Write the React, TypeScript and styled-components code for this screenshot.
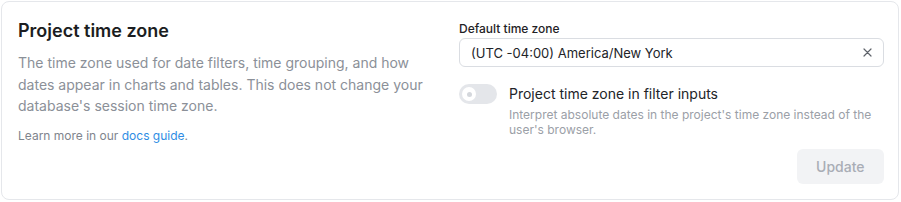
import styled, { createGlobalStyle } from "styled-components"

const GlobalStyle = createGlobalStyle`
  html, body {
    margin: 0;
    padding: 0;
    background: #ffffff;
  }
  body {
    font-family: Inter, "Noto Sans", sans-serif;
    -webkit-font-smoothing: antialiased;
  }
  #root {
    padding: 1px 2px 1px 1px;
  }
`

const Card = styled.section`
  box-sizing: border-box;
  width: 898px;
  border: 1px solid #e5e7eb;
  border-radius: 8px;
  background: #fff;
  padding: 16px 14px 15px 16px;
  display: grid;
  grid-template-columns: 1fr 1fr;
  column-gap: 16px;
`

const Column = styled.div`
  display: flex;
  flex-direction: column;
`

const Title = styled.h2`
  margin: 0;
  font-size: 18px;
  line-height: 26px;
  font-weight: 600;
  color: #1b1d21;
`

const Description = styled.p`
  margin: 8px 0 0;
  font-size: 14px;
  line-height: 21.6px;
  color: #8b9098;
`

const Note = styled.p`
  margin: 10px 0 0;
  font-size: 12px;
  line-height: 18px;
  color: #80858d;
`

const Link = styled.a`
  color: #2f8de4;
  text-decoration: none;
`

const FieldLabel = styled.label`
  margin-top: 3px;
  margin-bottom: 1px;
  font-size: 12px;
  line-height: 16px;
  font-weight: 500;
  color: #1f2226;
`

const Select = styled.div`
  box-sizing: border-box;
  height: 29px;
  display: flex;
  align-items: center;
  justify-content: space-between;
  padding: 0 11px;
  border: 1px solid #dadde2;
  border-radius: 6px;
  font-size: 13px;
  color: #222428;
`

const ClearButton = styled.span`
  display: flex;
  align-items: center;
  color: #5f636a;
`

const ToggleRow = styled.div`
  margin-top: 17px;
  display: flex;
  gap: 12px;
`

const Track = styled.div<{ $on?: boolean }>`
  flex: none;
  box-sizing: border-box;
  width: 38px;
  height: 20px;
  border-radius: 10px;
  background: ${(p) => (p.$on ? "#2f8de4" : "#e4e6ea")};
  padding: 3px;
  display: flex;
  justify-content: ${(p) => (p.$on ? "flex-end" : "flex-start")};
`

const Knob = styled.div`
  width: 14px;
  height: 14px;
  border-radius: 50%;
  background: #fff;
  display: flex;
  align-items: center;
  justify-content: center;
  &::after {
    content: "";
    width: 5px;
    height: 5px;
    border-radius: 50%;
    background: #d4d7dc;
  }
`

const ToggleText = styled.div`
  display: flex;
  flex-direction: column;
`

const ToggleLabel = styled.div`
  font-size: 14px;
  line-height: 20px;
  color: #222428;
`

const ToggleHint = styled.div`
  margin-top: 3px;
  font-size: 12px;
  line-height: 15px;
  color: #9ba0a7;
`

const Actions = styled.div`
  margin-top: 12px;
  display: flex;
  justify-content: flex-end;
`

const Button = styled.button`
  height: 35px;
  padding: 0 19.5px;
  border: none;
  border-radius: 6px;
  background: #f2f3f5;
  color: #a9adb5;
  font-family: inherit;
  font-size: 14px;
  font-weight: 500;
`

export default function App() {
  return (
    <>
      <GlobalStyle />
      <Card>
        <Column>
          <Title>Project time zone</Title>
          <Description>
            The time zone used for date filters, time grouping, and how dates appear in
            charts and tables. This does not change your database's session time zone.
          </Description>
          <Note>
            Learn more in our <Link href="#">docs guide</Link>.
          </Note>
        </Column>
        <Column>
          <FieldLabel>Default time zone</FieldLabel>
          <Select>
            <span>(UTC -04:00) America/New York</span>
            <ClearButton>
              <svg width="9" height="9" viewBox="0 0 9 9" fill="none">
                <path d="M1 1L8 8M8 1L1 8" stroke="currentColor" strokeWidth="1.2" strokeLinecap="round" />
              </svg>
            </ClearButton>
          </Select>
          <ToggleRow>
            <Track>
              <Knob />
            </Track>
            <ToggleText>
              <ToggleLabel>Project time zone in filter inputs</ToggleLabel>
              <ToggleHint>
                Interpret absolute dates in the project's time zone instead of the user's
                browser.
              </ToggleHint>
            </ToggleText>
          </ToggleRow>
          <Actions>
            <Button disabled>Update</Button>
          </Actions>
        </Column>
      </Card>
    </>
  )
}
